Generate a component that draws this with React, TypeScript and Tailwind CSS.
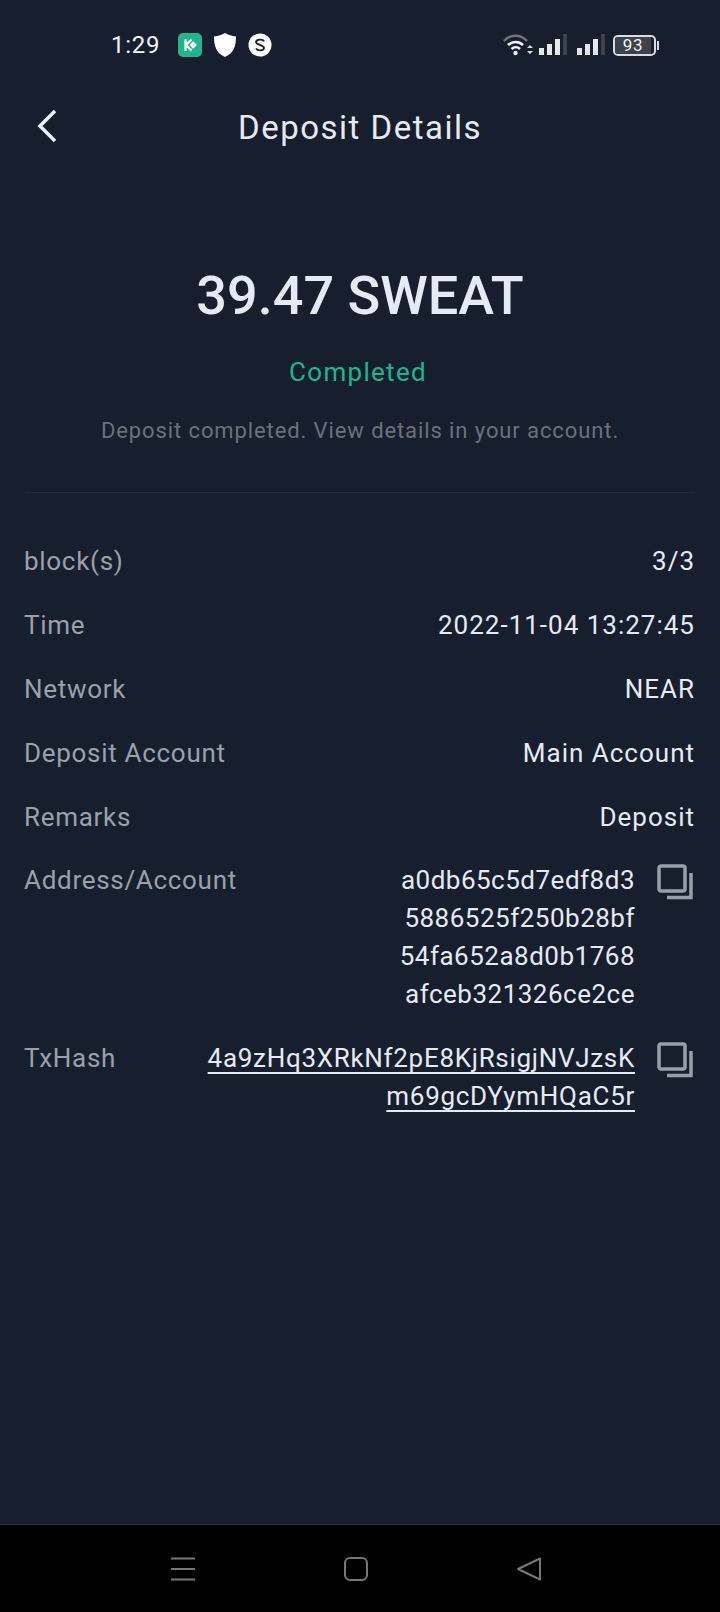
const font = "font-['Roboto',sans-serif]";

const CopyIcon = () => (
  <svg width="36" height="36" viewBox="0 0 36 36" fill="none" stroke="#9a9ea8" strokeWidth="3.500" className="shrink-0 -mt-[3px]">
    <rect x="2" y="2" width="26" height="25" rx="2" />
    <path d="M34 9v24.500H10" />
  </svg>
);

const Row = ({ label, value }: { label: string; value: string }) => (
  <div className="flex h-16 items-center justify-between">
    <span className="text-[#9ba0ab]">{label}</span>
    <span className="tracking-[1px] text-[#e6eaf5]">{value}</span>
  </div>
);

const StatusBar = () => (
  <div className="flex h-[67px] items-center pl-[111px] pr-[61px] pt-[23px]">
    <span className="w-[48px] text-[24px] leading-none text-[#f2f4f8]">1:29</span>
    <div className="ml-[19px] flex items-center gap-[11px]">
      <svg width="24" height="24" viewBox="0 0 24 24">
        <rect width="24" height="24" rx="5" fill="#22b38f" />
        <path d="M7.500 6v12M8 12l5.500-5.500M8 12l5.500 5.500M13 12l2.200-2.200 2.200 2.200-2.200 2.200z" stroke="#fff" strokeWidth="2.200" fill="none" />
      </svg>
      <svg width="24" height="26" viewBox="0 0 24 26">
        <path d="M12 1c3 1.800 7 3 11 3.500 0 9-2 16.500-11 20.500C3 21 1 13.500 1 4.500 5 4 9 2.800 12 1z" fill="#fff" />
      </svg>
      <svg width="24" height="24" viewBox="0 0 24 24">
        <circle cx="12" cy="12" r="11.500" fill="#fff" />
        <path d="M16 8.500C15 6 8.500 6 8 9c-.4 3 8 2.800 8 6 0 3-6.500 3-8 .5" stroke="#1a1f2c" strokeWidth="1.800" fill="none" />
      </svg>
    </div>
    <div className="ml-auto flex items-center">
      <svg width="32" height="24" viewBox="0 0 32 24" fill="none">
        <path d="M1 8c6-7 17-7 23 0" stroke="#70747c" strokeWidth="2.500" />
        <path d="M5 12c4-4 11-4 15 0M8.500 16c2.500-2.500 6-2.500 8.500 0" stroke="#f2f4f8" strokeWidth="2.500" />
        <circle cx="12.500" cy="20" r="2.200" fill="#f2f4f8" />
        <path d="M24 15l3-3 3 3zM24 18l3 3 3-3z" fill="#d8dbe0" />
      </svg>
      <svg width="30" height="24" viewBox="0 0 30 24" className="ml-[3px]">
        <rect x="1" y="15" width="5" height="7" fill="#e6e8ec" />
        <rect x="9" y="11" width="5" height="11" fill="#e6e8ec" />
        <rect x="17" y="6" width="5" height="16" fill="#e6e8ec" />
        <rect x="25" y="1" width="4" height="21" fill="#3e424b" />
      </svg>
      <svg width="30" height="24" viewBox="0 0 30 24" className="ml-[8px]">
        <rect x="1" y="15" width="5" height="7" fill="#e6e8ec" />
        <rect x="9" y="11" width="5" height="11" fill="#e6e8ec" />
        <rect x="17" y="6" width="5" height="16" fill="#e6e8ec" />
        <rect x="25" y="1" width="4" height="21" fill="#3e424b" />
      </svg>
      <div className="ml-[7px] flex items-center">
        <div className="relative h-[21px] w-[43px] overflow-hidden rounded-[5px] border-2 border-[#d8dbe0]">
          <div className="flex h-full w-[92%] items-center justify-center bg-[#3e424b] text-[17px] leading-none text-[#f2f4f8]">93</div>
        </div>
        <div className="ml-[1px] h-[9px] w-[2px] bg-[#d8dbe0]" />
      </div>
    </div>
  </div>
);

export default function App() {
  return (
    <div className={`${font} flex h-[1612px] w-[720px] flex-col bg-[#171e2d] tracking-[0.7px]`}>
      <StatusBar />

      <div className="relative mt-[33px] flex h-[54px] items-center justify-center">
        <svg width="22" height="34" viewBox="0 0 22 34" fill="none" stroke="#eef1f8" strokeWidth="3.500" className="absolute left-[37px] top-[9px]">
          <path d="M18 2L3 17l15 15" />
        </svg>
        <span className="text-[33px] leading-none tracking-[1.500px] text-[#e6eaf5]">Deposit Details</span>
      </div>

      <div className="mt-[115px] flex flex-col items-center">
        <div className="text-[54px] leading-none font-medium tracking-[0px] text-[#e6eaf5]">39.47 SWEAT</div>
        <div className="mt-[36px] pr-[4px] text-[26px] leading-none tracking-[1.300px] text-[#1eb58e]">Completed</div>
        <div className="mt-[35px] text-[22px] leading-none tracking-[0.900px] text-[#6c717d]">Deposit completed. View details in your account.</div>
      </div>

      <div className="mx-[25px] mt-[50px] border-t border-[#232a39]" />

      <div className="mt-[36px] flex flex-col pl-[24px] pr-[25px] text-[26px] leading-none">
        <Row label="block(s)" value="3/3" />
        <Row label="Time" value="2022-11-04 13:27:45" />
        <Row label="Network" value="NEAR" />
        <Row label="Deposit Account" value="Main Account" />
        <Row label="Remarks" value="Deposit" />

        <div className="flex justify-between pt-[18px] pr-[2px]">
          <span className="text-[#9ba0ab]">Address/Account</span>
          <div className="flex gap-[22px]">
            <div className="text-right text-[#e6eaf5] leading-[38px] -mt-[6px] tracking-[0.500px]">
              <div>a0db65c5d7edf8d3</div>
              <div>5886525f250b28bf</div>
              <div>54fa652a8d0b1768</div>
              <div>afceb321326ce2ce</div>
            </div>
            <CopyIcon />
          </div>
        </div>

        <div className="mt-[32px] flex justify-between pr-[2px]">
          <span className="text-[#9ba0ab]">TxHash</span>
          <div className="flex gap-[22px]">
            <div className="text-right text-[#e6eaf5] underline underline-offset-[5px] [text-decoration-skip-ink:none] leading-[38px] -mt-[6px]">
              <div>4a9zHq3XRkNf2pE8KjRsigjNVJzsK</div>
              <div>m69gcDYymHQaC5r</div>
            </div>
            <CopyIcon />
          </div>
        </div>
      </div>

      <div className="mt-auto flex h-[88px] items-center justify-center gap-[147px] border-t border-[#2a2e38] bg-black pr-[9px]">
        <svg width="26" height="26" viewBox="0 0 26 26" stroke="#777" strokeWidth="2">
          <path d="M1 2.500h24M1 13h24M1 23.500h24" />
        </svg>
        <svg width="26" height="26" viewBox="0 0 26 26" fill="none" stroke="#777" strokeWidth="2">
          <rect x="2" y="2" width="22" height="22" rx="5" />
        </svg>
        <svg width="26" height="26" viewBox="0 0 26 26" fill="none" stroke="#777" strokeWidth="2" strokeLinejoin="round">
          <path d="M24 2.500v21L2 13z" />
        </svg>
      </div>
    </div>
  );
}
